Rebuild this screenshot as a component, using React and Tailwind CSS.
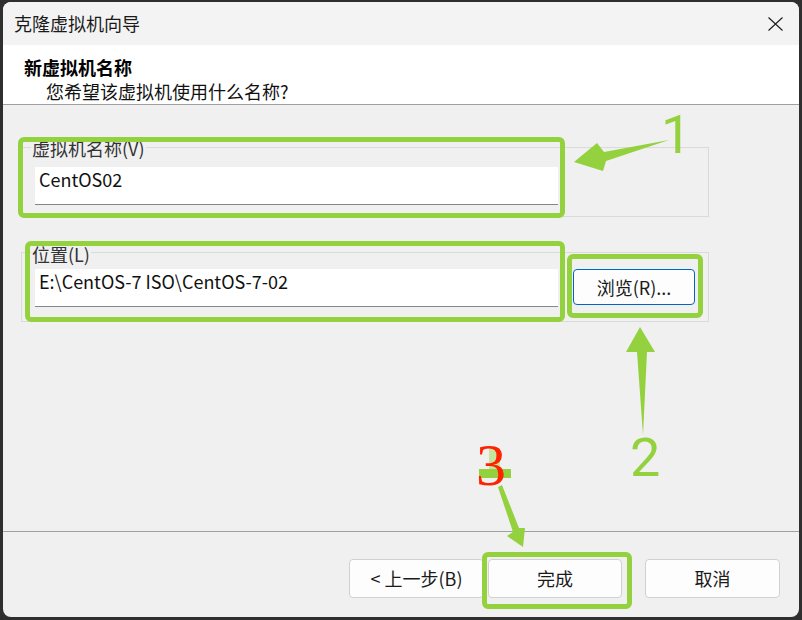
const font = { fontFamily: '"Noto Sans CJK SC", "Noto Sans", sans-serif' };
const digitFont = { fontFamily: 'Roboto, "Open Sans", sans-serif' };

function WinButton({ children, className = "" }) {
  return (
    <button
      type="button"
      className={`h-[39px] rounded-[4px] border border-[#d1d1d1] bg-[#fdfdfd] text-[18px] leading-[23px] text-[#1a1a1a] flex items-center justify-center ${className}`}
    >
      {children}
    </button>
  );
}

function GroupBox({ label, labelTop, pt, children }) {
  return (
    <div className={`relative w-[688px] h-[70px] border border-[#dadada] pl-[13px] ${pt} flex items-start`}>
      <span className={`absolute left-[9px] ${labelTop} px-[1px] bg-[#f0f0f0] text-[18px] leading-[23px] text-[#333]`}>
        {label}
      </span>
      {children}
    </div>
  );
}

function TextField({ value }) {
  return (
    <div className="w-[523px] h-[38px] bg-white border-b border-[#868686] pl-[4px] pt-[1px] text-[18px] leading-[23px] text-[#111]">
      {value}
    </div>
  );
}

export default function App() {
  return (
    <div className="relative w-[802px] h-[620px] bg-[#2f2f2f] overflow-hidden pt-[2px] pl-[3px]" style={font}>
      <div className="w-[796px] h-[615px] rounded-[8px] overflow-hidden flex flex-col bg-[#f0f0f0]">
        {/* title bar */}
        <div className="h-[43px] bg-[#f3f3f3] flex items-center justify-between pl-[11px] pr-[16px]">
          <span className="text-[18px] leading-[23px] text-[#1a1a1a]">克隆虚拟机向导</span>
          <svg width="15" height="14" viewBox="0 0 15 14">
            <path d="M0.5 0.5 L14.5 13.5 M14.5 0.5 L0.5 13.5" stroke="#1a1a1a" strokeWidth="1.1" fill="none" />
          </svg>
        </div>

        {/* header */}
        <div className="h-[59px] bg-white pt-[10px] pl-[21px]">
          <div className="text-[18px] leading-[24px] font-bold text-black">新虚拟机名称</div>
          <div className="text-[18px] leading-[24px] text-[#111] pl-[22px]">您希望该虚拟机使用什么名称?</div>
        </div>
        <div className="h-px bg-[#a0a0a0]" />

        {/* body */}
        <div className="h-[426px] pl-[18px] pt-[42px]">
          <GroupBox label="虚拟机名称(V)" labelTop="top-[-11px]" pt="pt-[19px]">
            <TextField value="CentOS02" />
          </GroupBox>
          <div className="mt-[35px]">
            <GroupBox label="位置(L)" labelTop="top-[-10px]" pt="pt-[16px]">
              <TextField value="E:\CentOS-7 ISO\CentOS-7-02" />
              <button
                type="button"
                className="ml-[15px] w-[122px] h-[36px] rounded-[4px] border border-[#0067c0] bg-[#fdfdfd] text-[18px] leading-[23px] text-[#1a1a1a] flex items-center justify-center"
              >
                浏览(R)...
              </button>
            </GroupBox>
          </div>
        </div>
        <div className="h-px bg-[#a0a0a0]" />

        {/* footer */}
        <div className="h-[85px] flex justify-end items-start pt-[27px] pr-[19px]">
          <WinButton className="w-[135px]">&lt; 上一步(B)</WinButton>
          <WinButton className="w-[134px] ml-[4px]">完成</WinButton>
          <WinButton className="w-[135px] ml-[23px]">取消</WinButton>
        </div>
      </div>

      {/* annotations */}
      <div className="absolute left-[18px] top-[137px] w-[547px] h-[81px] border-[5px] border-[#94d13f] rounded-[6px] pointer-events-none" />
      <div className="absolute left-[25px] top-[241px] w-[540px] h-[81px] border-[5px] border-[#94d13f] rounded-[6px] pointer-events-none" />
      <div className="absolute left-[567px] top-[254px] w-[136px] h-[64px] border-[5px] border-[#94d13f] rounded-[6px] pointer-events-none" />
      <div className="absolute left-[482px] top-[552px] w-[150px] h-[57px] border-[5px] border-[#94d13f] rounded-[6px] pointer-events-none" />

      <div className="absolute left-[489px] top-[448px] w-[11px] h-[21px] bg-[#c6e3a0]" />
      <div className="absolute left-[479px] top-[469px] w-[32px] h-[9px] bg-[#94d13f]" />

      <svg className="absolute left-0 top-0 pointer-events-none" width="802" height="620" viewBox="0 0 802 620">
        <polygon points="669,140 604,152 597,143 574,162 603,171 606,161" fill="#94d13f" />
        <polygon points="640,327 655,352 647,352 643,435 637,352 626,352" fill="#94d13f" />
        <polygon points="498,487 502,485 519,528 525,528 523,547 507,536 513,532" fill="#94d13f" />
      </svg>

      <span className="absolute left-[661px] top-[108px] text-[54px] leading-none text-[#94d13f]" style={digitFont}>
        1
      </span>
      <span className="absolute left-[630px] top-[431px] text-[54px] leading-none text-[#94d13f]" style={digitFont}>
        2
      </span>
      <span
        className="absolute left-[476px] top-[435px] text-[60px] leading-none text-[#ff2200]"
        style={{ fontFamily: '"Liberation Serif", serif' }}
      >
        3
      </span>
    </div>
  );
}
